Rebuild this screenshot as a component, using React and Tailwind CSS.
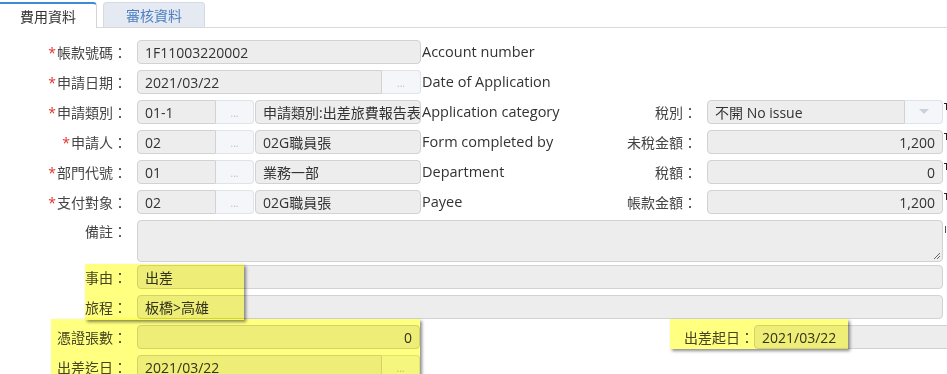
import React from "react";

const font = "font-['Open_Sans','Noto_Sans_CJK_TC',sans-serif]";

function Label({ req, children, className = "w-[127px]" }) {
  return (
    <div className={`${className} shrink-0 text-right text-[14px] text-[#444] whitespace-nowrap`}>
      {req && <span className="text-[#e0342c] mr-[1px]">*</span>}
      {children}
    </div>
  );
}

function Field({ value, w, align = "left", round = "rounded-[4px]" }) {
  return (
    <div
      className={`${w} ${round} shrink-0 h-[24px] bg-[#ededed] border border-[#d2d2d2] px-[7px] flex items-center text-[14px] text-[#333] whitespace-nowrap overflow-hidden ${
        align === "right" ? "justify-end" : ""
      }`}
    >
      {value}
    </div>
  );
}

function Btn({ w = "w-[38px]" }) {
  return (
    <div className={`${w} shrink-0 h-[24px] bg-[#f4f6f9] border border-l-0 border-[#dfe3ea] rounded-r-[4px] flex items-end justify-center pb-[5px] text-[10px] leading-none text-[#b9c1cc]`}>
      ...
    </div>
  );
}

// clipped edge of a glyph at the right border of the page
function Mark() {
  return (
    <div className="ml-[1px] -mt-[10px] w-[4px] h-[8px] relative shrink-0">
      <div className="absolute left-0 top-0 w-[4px] h-px bg-[#222]" />
      <div className="absolute left-[2px] top-0 w-px h-[7px] bg-[#222]" />
    </div>
  );
}

function RightSide({ label, children }) {
  return (
    <>
      <Label className="w-[85px]">{label}</Label>
      <div className="ml-[10px] flex shrink-0">{children}</div>
      <Mark />
    </>
  );
}

function CodeRow({ label, code, name, en, right, rightLabel }) {
  return (
    <div className="flex items-center h-[30px]">
      <Label req>{label}</Label>
      <div className="ml-[10px] flex w-[284px] shrink-0">
        <Field value={code} w="w-[79px]" round="rounded-l-[4px]" />
        <Btn />
        <div className="ml-[1px]">
          <Field value={name} w="w-[166px]" />
        </div>
      </div>
      <div className="w-[191px] shrink-0 pl-[1px] text-[14.5px] text-[#333] whitespace-nowrap">{en}</div>
      <RightSide label={rightLabel}>{right}</RightSide>
    </div>
  );
}

export default function App() {
  return (
    <div className={`${font} relative w-[947px] h-[374px] overflow-hidden bg-white`}>
      {/* tabs */}
      <div className="flex items-end h-[28px]">
        <div className="w-[97px] h-[26px] border-t-2 border-r border-t-[#3d8ad6] border-r-[#d4d4d4] rounded-tr-[4px] flex items-center justify-center text-[14px] text-[#333]">
          費用資料
        </div>
        <div className="flex-1 flex items-end border-b border-[#d9d9d9] h-[26px]">
          <div className="ml-[6px] w-[102px] h-[25px] bg-[#e5eaf2] border border-b-0 border-[#d3dae4] rounded-t-[4px] flex items-center justify-center text-[14px] text-[#4d7fc0]">
            審核資料
          </div>
        </div>
      </div>

      {/* form */}
      <div className="mt-[9px]">
        <div className="flex items-center h-[30px]">
          <Label req>帳款號碼：</Label>
          <div className="ml-[10px]">
            <Field value="1F11003220002" w="w-[284px]" />
          </div>
          <div className="pl-[1px] text-[14.5px] text-[#333]">Account number</div>
        </div>

        <div className="flex items-center h-[30px]">
          <Label req>申請日期：</Label>
          <div className="ml-[10px] flex">
            <Field value="2021/03/22" w="w-[245px]" round="rounded-l-[4px]" />
            <Btn w="w-[39px]" />
          </div>
          <div className="pl-[1px] text-[14.5px] text-[#333]">Date of Application</div>
        </div>

        <CodeRow
          label="申請類別："
          code="01-1"
          name="申請類別:出差旅費報告表"
          en="Application category"
          rightLabel="稅別："
          right={
            <>
              <Field value="不開 No issue" w="w-[198px]" round="rounded-l-[4px]" />
              <div className="w-[38px] h-[24px] bg-[#f4f6f9] border border-l-0 border-[#dfe3ea] rounded-r-[4px] flex items-center justify-center">
                <svg width="10" height="6" viewBox="0 0 10 6">
                  <path d="M0 0 L10 0 L5 5 Z" fill="#c9d1dc" />
                </svg>
              </div>
            </>
          }
        />
        <CodeRow
          label="申請人："
          code="02"
          name="02G職員張"
          en="Form completed by"
          rightLabel="未稅金額："
          right={<Field value="1,200" w="w-[236px]" align="right" />}
        />
        <CodeRow
          label="部門代號："
          code="01"
          name="業務一部"
          en="Department"
          rightLabel="稅額："
          right={<Field value="0" w="w-[236px]" align="right" />}
        />
        <CodeRow
          label="支付對象："
          code="02"
          name="02G職員張"
          en="Payee"
          rightLabel="帳款金額："
          right={<Field value="1,200" w="w-[236px]" align="right" />}
        />

        {/* remarks */}
        <div className="flex items-start h-[45px] pt-[3px]">
          <Label>
            <span className="leading-[24px]">備註：</span>
          </Label>
          <div className="ml-[10px] relative w-[806px] h-[42px] bg-[#ededed] border border-[#d2d2d2] rounded-[4px]">
            <svg className="absolute right-[1px] bottom-[1px]" width="8" height="8" viewBox="0 0 8 8">
              <path d="M7 1 L1 7 M7 4 L4 7" stroke="#666" strokeWidth="1" />
            </svg>
          </div>
          <div className="ml-[2px] mt-[6px] w-px h-[7px] bg-[#555]" />
        </div>

        <div className="flex items-center h-[30px]">
          <Label>事由：</Label>
          <div className="ml-[10px]">
            <Field value="出差" w="w-[806px]" />
          </div>
        </div>
        <div className="flex items-center h-[30px]">
          <Label>旅程：</Label>
          <div className="ml-[10px]">
            <Field value="板橋>高雄" w="w-[806px]" />
          </div>
        </div>

        <div className="flex items-center h-[30px]">
          <Label>憑證張數：</Label>
          <div className="ml-[10px]">
            <Field value="0" w="w-[283px]" align="right" />
          </div>
          <Label className="ml-[257px] w-[77px] text-left">出差起日：</Label>
          <Field value="2021/03/22" w="w-[200px]" round="rounded-l-[4px]" />
        </div>
        <div className="flex items-center h-[30px]">
          <Label>出差迄日：</Label>
          <div className="ml-[10px] flex">
            <Field value="2021/03/22" w="w-[245px]" round="rounded-l-[4px]" />
            <Btn />
          </div>
        </div>
      </div>

      {/* yellow highlight annotations */}
      <div className="absolute left-[85px] top-[264px] w-[159px] h-[56px] bg-[#ffff80] mix-blend-multiply shadow-[2px_2px_3px_rgba(0,0,0,0.45)]" />
      <div className="absolute left-[51px] top-[319px] w-[369px] h-[60px] bg-[#ffff80] mix-blend-multiply shadow-[2px_2px_3px_rgba(0,0,0,0.45)]" />
      <div className="absolute left-[670px] top-[319px] w-[178px] h-[30px] bg-[#ffff80] mix-blend-multiply shadow-[2px_2px_3px_rgba(0,0,0,0.45)]" />
    </div>
  );
}
